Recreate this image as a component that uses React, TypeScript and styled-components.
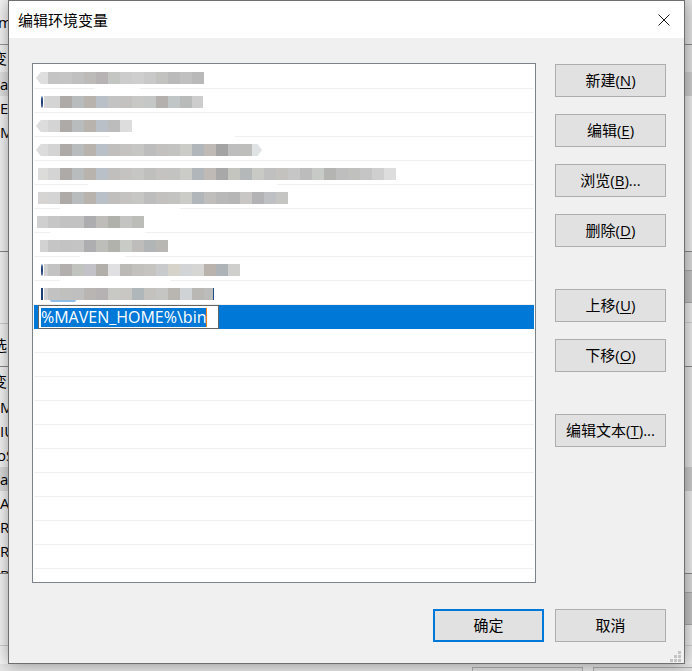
import React, { FC } from "react";
import styled, { createGlobalStyle } from "styled-components";

const GlobalStyle = createGlobalStyle`
  html, body {
    margin: 0;
    padding: 0;
    background: #ededed;
  }
`;

const uiFont = `"Open Sans", "Noto Sans CJK SC", sans-serif`;

const Desktop = styled.div`
  display: grid;
  grid-template-columns: 8px 677px 7px;
  grid-template-rows: 664px 7px;
  width: 692px;
  height: 671px;
  overflow: hidden;
  font-family: ${uiFont};
  color: #000;
`;

const LeftStrip = styled.div`
  display: flex;
  flex-direction: column;
  overflow: hidden;
  background: #f6f6f6;
`;

const RightStrip = styled.div`
  display: flex;
  flex-direction: column;
  overflow: hidden;
  background: #ececec;
`;

const BehindRow = styled.div<{ $h: number; $line?: string; $bg?: string; $lh?: number }>`
  flex: none;
  box-sizing: border-box;
  height: ${(p) => p.$h}px;
  overflow: hidden;
  border-bottom: ${(p) => (p.$line ? `1px solid ${p.$line}` : "none")};
  background: ${(p) => p.$bg || "transparent"};
  font-size: 15px;
  line-height: ${(p) => p.$lh || p.$h}px;
  white-space: nowrap;
`;

const BottomStrip = styled.div`
  grid-column: 1 / 4;
  display: flex;
  gap: 10px;
  padding: 3px 0 0 472px;
  background: #e6e6e6;
`;

const BehindButton = styled.div`
  box-sizing: border-box;
  flex: none;
  width: 111px;
  height: 33px;
  border: 1px solid #adadad;
  background: #e1e1e1;
`;

const Dialog = styled.div`
  position: relative;
  z-index: 1;
  display: flex;
  flex-direction: column;
  box-sizing: border-box;
  border: 1px solid #6f6f6f;
  background: #f0f0f0;
  box-shadow: 0 0 16px rgba(0, 0, 0, 0.4);
`;

const TitleBar = styled.div`
  flex: none;
  display: flex;
  align-items: center;
  justify-content: space-between;
  height: 37px;
  padding: 0 14px 0 9px;
  background: #fff;
`;

const Title = styled.div`
  font-size: 15px;
  line-height: 20px;
  margin-top: 1px;
`;

const CloseIcon = styled.svg`
  display: block;
  width: 12px;
  height: 12px;
  margin-top: 1px;
`;

const Body = styled.div`
  flex: 1;
  display: flex;
  flex-direction: column;
  padding: 25px 18px 0 23px;
`;

const Main = styled.div`
  display: flex;
  gap: 19px;
`;

const PathList = styled.div`
  flex: none;
  box-sizing: border-box;
  width: 504px;
  height: 520px;
  padding: 1px 1px 0;
  overflow: hidden;
  border: 1px solid #7e838b;
  background: #fff;
`;

const PathRow = styled.div<{ $selected?: boolean }>`
  display: flex;
  box-sizing: border-box;
  height: 24px;
  border-bottom: 1px solid ${(p) => (p.$selected ? "#0078d7" : "#f0f0f0")};
  background: ${(p) => (p.$selected ? "#0078d7" : "#fff")};
`;

const Mosaic = styled.div<{ $left: number }>`
  position: relative;
  display: flex;
  height: 12px;
  margin: 7px 0 0 ${(p) => p.$left}px;
`;

const cellShapes = {
  left: "polygon(100% 0, 100% 100%, 40% 100%, 0 50%, 40% 0)",
  right: "polygon(0 0, 55% 0, 100% 50%, 55% 100%, 0 100%)",
  none: "none",
};

const MosaicCell = styled.div<{ $w: number; $c: string; $shape?: keyof typeof cellShapes }>`
  flex: none;
  width: ${(p) => p.$w}px;
  background: ${(p) => p.$c};
  clip-path: ${(p) => cellShapes[p.$shape || "none"]};
`;

// left-over bits of the original glyphs that stick out of the blur
const GlyphMark = styled.div<{ $square?: boolean }>`
  position: absolute;
  top: 0;
  left: -3px;
  width: 2px;
  height: 12px;
  border-left: 2px solid #1f3f74;
  border-radius: ${(p) => (p.$square ? "0" : "50%")};
  box-sizing: border-box;
`;

const EndMark = styled.div`
  position: absolute;
  top: 0;
  right: -1px;
  width: 1px;
  height: 12px;
  background: #1f4f8a;
`;

const BlueSmear = styled.div`
  position: absolute;
  top: 12px;
  left: 6px;
  width: 26px;
  height: 2px;
  border-radius: 0 0 8px 8px;
  background: #8fbde6;
`;

const WhiteSmear = styled.div<{ $from: number; $to: number }>`
  position: absolute;
  top: 13px;
  left: ${(p) => p.$from}px;
  width: ${(p) => p.$to - p.$from}px;
  height: 6px;
  background: #fff;
`;

const EditBox = styled.div`
  flex: none;
  display: flex;
  align-items: center;
  box-sizing: border-box;
  width: 181px;
  height: 24px;
  margin-left: 4px;
  padding-left: 2px;
  border: 1px solid #646464;
  background: #fff;
`;

const EditSelection = styled.span`
  display: block;
  height: 19px;
  border-right: 1px solid #e8801c;
  background: #0078d7;
  color: #fff;
  font-size: 16px;
  line-height: 19px;
  white-space: nowrap;
`;

const ButtonColumn = styled.div`
  display: flex;
  flex-direction: column;
  gap: 42px;
  padding-top: 1px;
`;

const ButtonGroup = styled.div`
  display: flex;
  flex-direction: column;
  gap: 17px;
`;

const Button = styled.div<{ $primary?: boolean }>`
  flex: none;
  display: flex;
  align-items: center;
  justify-content: center;
  box-sizing: border-box;
  width: 111px;
  height: 33px;
  padding-bottom: 2px;
  border: ${(p) => (p.$primary ? "2px solid #0078d7" : "1px solid #adadad")};
  background: #e1e1e1;
  font-size: 15px;
  white-space: nowrap;
`;

const Mnemonic = styled.span`
  text-decoration: underline;
  text-underline-offset: 2px;
  text-decoration-thickness: 1px;
`;

const Footer = styled.div`
  display: flex;
  justify-content: flex-end;
  gap: 11px;
  margin-top: 26px;
`;

const Grip = styled.svg`
  position: absolute;
  right: 3px;
  bottom: 1px;
  width: 11px;
  height: 11px;
`;

type BlurredRow = {
  start: number;
  end: number;
  colors: string[];
  point?: "left" | "both";
  mark?: "round" | "square";
  endMark?: boolean;
  blue?: boolean;
  gap?: [number, number];
};

const brand = ["#d3d4d3", "#aeaaa7", "#b8bcbc", "#b9b3ae", "#b9c0c8"];

const blurredRows: BlurredRow[] = [
  { start: 36, end: 204, point: "left", gap: [95, 140], colors: ["#dedede", "#c4c4c4", "#c5c5c5", "#c0c0c0", "#bdbbb9", "#b7b3b5", "#c4c6c3", "#cbcccb", "#cdcecd", "#c8c9c8", "#c2c2c0", "#b9bab9", "#bfc0bf", "#b8b9b8"] },
  { start: 44, end: 203, mark: "round", colors: ["#d6d6d6", ...brand, "#c3c3c3", "#c3c2c0", "#c8c8c6", "#c5c7c7", "#b3b0ad", "#c0c5c6", "#b9bbba", "#cdcdcd"] },
  { start: 36, end: 132, point: "left", gap: [110, 235], colors: ["#dcdcdc", ...brand, "#bdbcbc", "#dddddd"] },
  { start: 36, end: 262, point: "both", colors: ["#dcdcdc", ...brand, "#c0bfbe", "#c4c3c1", "#c6c6c4", "#bcbdbc", "#c2c1bf", "#c3c3c1", "#cbcbc7", "#b1b6ba", "#bfbab6", "#a3a3a3", "#bdbebd", "#bebebd", "#e0e3e3"] },
  { start: 38, end: 396, gap: [88, 277], colors: ["#dcdcdb", ...brand, "#c0bfbe", "#c4c3c1", "#c6c6c4", "#bfbfbe", "#c4c3c1", "#c3c3c1", "#cbcbc7", "#b1b6ba", "#bfbab6", "#a8a8a8", "#c5c5c0", "#b4b8b8", "#c9c9c6", "#c0c0c0", "#c3c2bf", "#c6c6c6", "#bcbcbc", "#c8cac8", "#b4b4b2", "#bebebe", "#c0c0bf", "#c5c5c5", "#cfcfcf", "#dddddd"] },
  { start: 38, end: 288, gap: [60, 180], colors: ["#d6d5d3", ...brand, "#c0bfbe", "#c4c3c1", "#c6c6c4", "#bcbdbc", "#c2c1bf", "#c3c3c1", "#cbcbc7", "#b1b6ba", "#c0bebc", "#b8b8b8", "#b6b6b6", "#c8c7c5", "#b3b3b5", "#bfc0c3", "#c5c5c3"] },
  { start: 37, end: 144, gap: [50, 145], colors: ["#cfcfcf", "#c6c6c6", "#c2c2c2", "#c2c2c2", "#adadb0", "#bebdba", "#b1b1ab", "#c4c4c2", "#bcbcb9"] },
  { start: 40, end: 168, gap: [80, 125], colors: ["#d2d2d2", "#c5c5c5", "#c3c3c3", "#c4c4c4", "#aeaeb0", "#bdbdba", "#b2b2ac", "#c9cbc7", "#bfbdbb", "#b2b5b6", "#b9b7b4"] },
  { start: 44, end: 240, mark: "round", gap: [60, 170], colors: ["#d0d0d0", "#c3c3c3", "#b3afaf", "#c1c3bf", "#c2c2c8", "#b2afab", "#e0e0e2", "#bbbab6", "#c3c1bd", "#c5c4c1", "#c8cacb", "#d6d3cb", "#d3d4d5", "#d6d7d4", "#b9b2ad", "#aeb3b8", "#cfd0ce"] },
  { start: 44, end: 213, mark: "square", endMark: true, blue: true, colors: ["#cfcfcf", "#c2c2c2", "#c0c0be", "#bfbfbf", "#b8b5b2", "#b6b2b3", "#c8c8c5", "#c8c7c4", "#b0b7ba", "#c3c2bf", "#c5c5c3", "#b9b6b2", "#d0d3d6", "#b9b8b5", "#bcbcbb"] },
];

// cells sit on a 12px raster that starts at x=48, the ends are cut to the blurred area
const cellWidth = (row: BlurredRow, index: number) => {
  if (index === 0) return 48 - row.start;
  const left = 48 + (index - 1) * 12;
  return Math.min(12, row.end - left);
};

const cellShape = (row: BlurredRow, index: number) => {
  if (index === 0 && row.point) return "left";
  if (index === row.colors.length - 1 && row.point === "both") return "right";
  return "none";
};

const emptyRows = 10;

type StripRow = { h: number; text?: string; line?: string; bg?: string; indent?: number; lh?: number };

const leftRows: StripRow[] = [
  { h: 45, text: "m", line: "#9a9a9a", indent: -2 },
  { h: 27, text: "变", indent: -8 },
  { h: 24, text: "a", bg: "#e4e4e4" },
  { h: 24, text: "E" },
  { h: 24, text: "M" },
  { h: 108, line: "#8a8a8a" },
  { h: 72, line: "#d0d0d0" },
  { h: 43, text: "选", line: "#8a8a8a", indent: -8 },
  { h: 28, text: "变", indent: -8 },
  { h: 24, text: "MA" },
  { h: 24, text: "IU" },
  { h: 24, text: "oS", indent: -3 },
  { h: 24, text: "a", bg: "#dedede" },
  { h: 24, text: "A" },
  { h: 24, text: "R" },
  { h: 24, text: "R" },
  { h: 11, text: "D", line: "#8a8a8a", lh: 24 },
  { h: 72, line: "#d0d0d0" },
  { h: 30 },
];

const rightRows: StripRow[] = [
  { h: 45, line: "#8a8a8a", bg: "#e4e4e4" },
  { h: 27, bg: "#e2e2e2" },
  { h: 24, bg: "#cfcfcf" },
  { h: 156, line: "#8a8a8a" },
  { h: 19, line: "#aaaaaa", bg: "#dcdcdc" },
  { h: 32, line: "#aaaaaa", bg: "#c4c4c4" },
  { h: 20, line: "#d0d0d0" },
  { h: 44, line: "#8a8a8a" },
  { h: 100, bg: "#e6e6e6" },
  { h: 24, bg: "#cccccc" },
  { h: 83, line: "#8a8a8a" },
  { h: 19, line: "#aaaaaa", bg: "#dcdcdc" },
  { h: 32, line: "#aaaaaa", bg: "#c4c4c4" },
  { h: 21, line: "#d0d0d0" },
  { h: 20 },
];

const Indent = styled.span<{ $x: number }>`
  display: inline-block;
  margin-left: ${(p) => p.$x}px;
`;

const App: FC = () => {
  return (
    <Desktop>
      <GlobalStyle />
      <LeftStrip>
        {leftRows.map((row, index) => (
          <BehindRow key={index} $h={row.h} $line={row.line} $bg={row.bg} $lh={row.lh}>
            {row.text && <Indent $x={row.indent || 0}>{row.text}</Indent>}
          </BehindRow>
        ))}
      </LeftStrip>
      <Dialog>
        <TitleBar>
          <Title>编辑环境变量</Title>
          <CloseIcon viewBox="0 0 12 12">
            <path d="M0.5 0.5 L11.5 11.5 M11.5 0.5 L0.5 11.5" stroke="#1a1a1a" strokeWidth="1" fill="none" />
          </CloseIcon>
        </TitleBar>
        <Body>
          <Main>
            <PathList>
              {blurredRows.map((row, index) => (
                <PathRow key={index}>
                  <Mosaic $left={row.start - 34}>
                    {row.gap && <WhiteSmear $from={row.gap[0] - row.start} $to={row.gap[1] - row.start} />}
                    {row.colors.map((c, i) => (
                      <MosaicCell key={i} $w={cellWidth(row, i)} $c={c} $shape={cellShape(row, i)} />
                    ))}
                    {row.mark && <GlyphMark $square={row.mark === "square"} />}
                    {row.endMark && <EndMark />}
                    {row.blue && <BlueSmear />}
                  </Mosaic>
                </PathRow>
              ))}
              <PathRow $selected>
                <EditBox>
                  <EditSelection>%MAVEN_HOME%\bin</EditSelection>
                </EditBox>
              </PathRow>
              {Array.from({ length: emptyRows }, (_, index) => (
                <PathRow key={index} />
              ))}
            </PathList>
            <ButtonColumn>
              <ButtonGroup>
                <Button>新建(<Mnemonic>N</Mnemonic>)</Button>
                <Button>编辑(<Mnemonic>E</Mnemonic>)</Button>
                <Button>浏览(<Mnemonic>B</Mnemonic>)...</Button>
                <Button>删除(<Mnemonic>D</Mnemonic>)</Button>
              </ButtonGroup>
              <ButtonGroup>
                <Button>上移(<Mnemonic>U</Mnemonic>)</Button>
                <Button>下移(<Mnemonic>O</Mnemonic>)</Button>
              </ButtonGroup>
              <ButtonGroup>
                <Button>编辑文本(<Mnemonic>T</Mnemonic>)...</Button>
              </ButtonGroup>
            </ButtonColumn>
          </Main>
          <Footer>
            <Button $primary>确定</Button>
            <Button>取消</Button>
          </Footer>
        </Body>
        <Grip viewBox="0 0 11 11" fill="#c4c4c4">
          <rect x="8" y="0" width="3" height="3" />
          <rect x="4" y="4" width="3" height="3" />
          <rect x="8" y="4" width="3" height="3" />
          <rect x="0" y="8" width="3" height="3" />
          <rect x="4" y="8" width="3" height="3" />
          <rect x="8" y="8" width="3" height="3" />
        </Grip>
      </Dialog>
      <RightStrip>
        {rightRows.map((row, index) => (
          <BehindRow key={index} $h={row.h} $line={row.line} $bg={row.bg} />
        ))}
      </RightStrip>
      <BottomStrip>
        <BehindButton />
        <BehindButton />
      </BottomStrip>
    </Desktop>
  );
};

export default App;
